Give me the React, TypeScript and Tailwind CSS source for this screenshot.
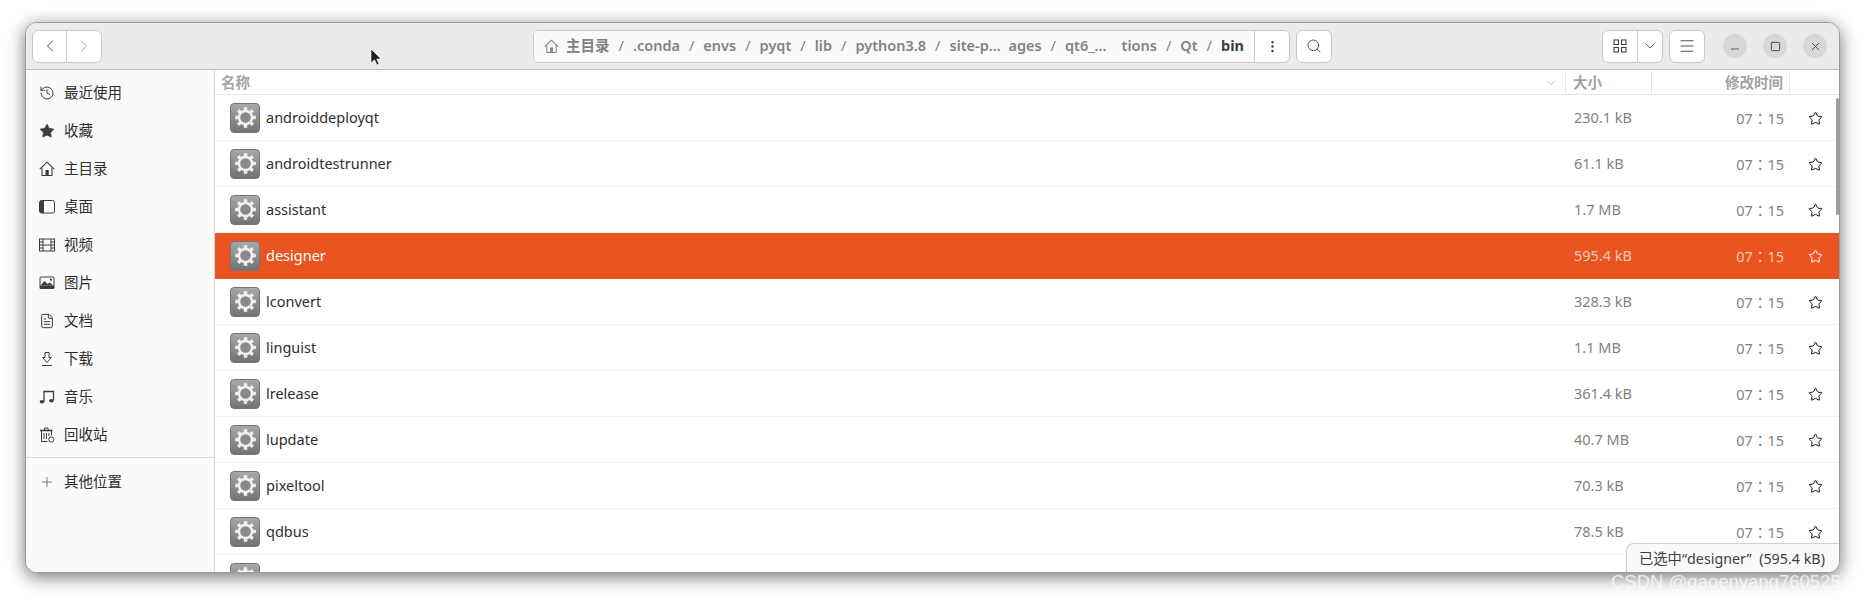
import React from 'react';
import { Plus, FileText, Star, Search, Menu, ChevronDown, ChevronLeft, ChevronRight, Minus, Square, X, MoreVertical, History } from 'lucide-react';

const cjk = "font-['Noto_Sans','Noto_Sans_CJK_SC',sans-serif]";

const HomeIcon = ({ className }: { className?: string }) => (
  <svg viewBox="0 0 16 16" className={className} fill="none" stroke="currentColor" strokeWidth="1.1">
    <path d="M.8 8.2 8 1.2l7.2 7" />
    <path d="M3 6.5V14.5H13V6.5" />
    <rect x="6.5" y="9" width="3.2" height="5.5" fill="currentColor" stroke="none" />
  </svg>
);

const DesktopIcon = () => (
  <svg viewBox="0 0 16 16" className="w-4 h-4 text-[#3d3d3d]" fill="none">
    <rect x="0.5" y="1.5" width="15" height="12.5" rx="2" stroke="currentColor" />
    <path d="M2.5 1.5H5V14H2.5A2 2 0 0 1 .5 12V3.5A2 2 0 0 1 2.5 1.5Z" fill="currentColor" />
  </svg>
);

const FilmIcon = () => (
  <svg viewBox="0 0 16 16" className="w-4 h-4 text-[#3d3d3d]" fill="none" stroke="currentColor">
    <rect x="0.5" y="2" width="15" height="12" />
    <path d="M4 2v12M12 2v12M4 8h8M.5 5h3.5M.5 8h3.5M.5 11h3.5M12 5h3.5M12 8h3.5M12 11h3.5" />
  </svg>
);

const PictureIcon = () => (
  <svg viewBox="0 0 16 16" className="w-4 h-4 text-[#3d3d3d]" fill="none">
    <rect x="0.5" y="1.5" width="15" height="12.5" rx="1.5" fill="currentColor" />
    <rect x="1.5" y="2.5" width="13" height="8" fill="#fafafa" />
    <path d="M1.5 10.5 5.5 6l3 3 2-1.5 4 3Z" fill="currentColor" />
    <circle cx="12" cy="4.7" r="1.1" fill="currentColor" />
  </svg>
);

const DownloadIcon = () => (
  <svg viewBox="0 0 16 16" className="w-4 h-4 text-[#3d3d3d]" fill="none" stroke="currentColor" strokeWidth="1">
    <path d="M6 1.5h4v5h2.5L8 11.5 3.5 6.5H6Z" />
    <path d="M3 14.5h10" />
  </svg>
);

const MusicIcon = () => (
  <svg viewBox="0 0 16 16" className="w-4 h-4 text-[#3d3d3d]" fill="none" stroke="currentColor" strokeWidth="1.3">
    <path d="M5 12.5V2.5h9.5v9" />
    <ellipse cx="3" cy="12.7" rx="2.3" ry="1.8" fill="currentColor" stroke="none" />
    <ellipse cx="12.4" cy="11.7" rx="2.3" ry="1.8" fill="currentColor" stroke="none" />
  </svg>
);

const TrashIcon = () => (
  <svg viewBox="0 0 16 16" className="w-4 h-4 text-[#3d3d3d]" fill="none" stroke="currentColor" strokeWidth="1">
    <path d="M1 3.5h12.5" strokeWidth="1.6" />
    <path d="M5.5 3V1h3.5v2" />
    <path d="M2.5 3.5v11h6M12.5 3.5v5" />
    <path d="M5 6v6M7.5 6v6M10 6v3" />
    <circle cx="12.3" cy="12.5" r="2.6" fill="#fafafa" />
  </svg>
);

const GridIcon = () => (
  <svg viewBox="0 0 14 14" className="w-[14px] h-[14px]" fill="none" stroke="currentColor" strokeWidth="1.1">
    <rect x="1" y="1" width="4.5" height="4.5" />
    <rect x="8.5" y="1" width="4.5" height="4.5" />
    <rect x="1" y="8.5" width="4.5" height="4.5" />
    <rect x="8.5" y="8.5" width="4.5" height="4.5" />
  </svg>
);

const GearTile = () => {
  const teeth = [0, 45, 90, 135, 180, 225, 270, 315];
  return (
    <div className="w-[30px] h-[30px] shrink-0 rounded-[4px] border border-[#757575] bg-gradient-to-b from-[#a8a8a8] to-[#737373] flex items-center justify-center">
      <svg viewBox="0 0 24 24" className="w-[23px] h-[23px]">
        {teeth.map((a) => (
          <rect key={a} x="10.2" y="1.2" width="3.6" height="4" fill="#f0f0f0" transform={`rotate(${a} 12 12)`} />
        ))}
        <circle cx="12" cy="12" r="6.8" fill="#8a8a8a" stroke="#f0f0f0" strokeWidth="2.6" />
      </svg>
    </div>
  );
};

const places = [
  { label: '最近使用', icon: <History className="w-4 h-4 text-[#3d3d3d]" strokeWidth={1.5} /> },
  { label: '收藏', icon: <Star className="w-4 h-4 text-[#3d3d3d] fill-[#3d3d3d]" strokeWidth={1} /> },
  { label: '主目录', icon: <HomeIcon className="w-4 h-4 text-[#3d3d3d]" /> },
  { label: '桌面', icon: <DesktopIcon /> },
  { label: '视频', icon: <FilmIcon /> },
  { label: '图片', icon: <PictureIcon /> },
  { label: '文档', icon: <FileText className="w-4 h-4 text-[#3d3d3d]" strokeWidth={1.5} /> },
  { label: '下载', icon: <DownloadIcon /> },
  { label: '音乐', icon: <MusicIcon /> },
  { label: '回收站', icon: <TrashIcon /> },
];

const files = [
  { name: 'androiddeployqt', size: '230.1 kB' },
  { name: 'androidtestrunner', size: '61.1 kB' },
  { name: 'assistant', size: '1.7 MB' },
  { name: 'designer', size: '595.4 kB', selected: true },
  { name: 'lconvert', size: '328.3 kB' },
  { name: 'linguist', size: '1.1 MB' },
  { name: 'lrelease', size: '361.4 kB' },
  { name: 'lupdate', size: '40.7 MB' },
  { name: 'pixeltool', size: '70.3 kB' },
  { name: 'qdbus', size: '78.5 kB' },
  { name: 'qdbuscpp2xml', size: '61.3 kB' },
];

const crumbs = ['.conda', 'envs', 'pyqt', 'lib', 'python3.8', 'site-p…  ages', 'qt6_…    tions', 'Qt'];

const btn = 'bg-white border border-[#cdc7c2] rounded-[6px] flex items-center justify-center text-[#3d3d3d]';

const App: React.FC = () => {
  return (
    <div className={`relative w-[1865px] h-[602px] bg-white overflow-hidden pt-[22px] pl-[25px] ${cjk}`}>
      <div className="relative w-[1815px] h-[551px] rounded-[12px] border border-[#9a9a9a] bg-white overflow-hidden shadow-[0_4px_18px_rgba(0,0,0,0.55)] flex flex-col">
        {/* header bar */}
        <div className="h-[47px] shrink-0 bg-[#ebebeb] border-b border-[#bdbdbd] flex items-center pl-[6px] pr-[10px]">
          <div className={`${btn} w-[70px] h-[33px]`}>
            <div className="w-1/2 h-full flex items-center justify-center border-r border-[#cdc7c2]">
              <ChevronLeft className="w-[20px] h-[20px]" strokeWidth={1.1} />
            </div>
            <div className="w-1/2 h-full flex items-center justify-center text-[#9a9a9a]">
              <ChevronRight className="w-[20px] h-[20px]" strokeWidth={1.1} />
            </div>
          </div>

          <div className="ml-[431px] w-[757px] h-[33px] bg-white border border-[#cdc7c2] rounded-[6px] flex overflow-hidden">
            <div className="flex-1 bg-[#fafafa] border-r border-[#cdc7c2] flex items-center pl-[10px] text-[14.5px] font-semibold text-[#828282] whitespace-pre">
              <HomeIcon className="w-[15px] h-[15px] mr-[7px]" />
              <span>主目录</span>
              {crumbs.map((c) => (
                <React.Fragment key={c}>
                  <span className="font-normal mx-[9px]">/</span>
                  <span>{c}</span>
                </React.Fragment>
              ))}
              <span className="font-normal mx-[9px]">/</span>
              <span className="font-bold text-[#3d3d3d]">bin</span>
            </div>
            <div className="w-[34px] flex items-center justify-center text-[#3d3d3d]">
              <MoreVertical className="w-[15px] h-[15px]" strokeWidth={2} />
            </div>
          </div>

          <div className={`${btn} ml-[6px] w-[36px] h-[33px]`}>
            <Search className="w-[16px] h-[16px]" strokeWidth={1.3} />
          </div>

          <div className={`${btn} ml-[270px] w-[61px] h-[33px]`}>
            <div className="w-[35px] h-full flex items-center justify-center border-r border-[#cdc7c2]">
              <GridIcon />
            </div>
            <div className="flex-1 flex items-center justify-center">
              <ChevronDown className="w-[16px] h-[16px]" strokeWidth={1.2} />
            </div>
          </div>

          <div className={`${btn} ml-[6px] w-[36px] h-[33px]`}>
            <Menu className="w-[18px] h-[18px]" strokeWidth={1.2} />
          </div>

          <div className="ml-[18px] flex gap-[16px]">
            <div className="w-[24px] h-[24px] rounded-full bg-[#d8d8d8] flex items-center justify-center text-[#3d3d3d]">
              <Minus className="w-[12px] h-[12px] translate-y-[3px]" strokeWidth={1.6} />
            </div>
            <div className="w-[24px] h-[24px] rounded-full bg-[#d8d8d8] flex items-center justify-center text-[#3d3d3d]">
              <Square className="w-[11px] h-[11px]" strokeWidth={2} />
            </div>
            <div className="w-[24px] h-[24px] rounded-full bg-[#d8d8d8] flex items-center justify-center text-[#3d3d3d]">
              <X className="w-[13px] h-[13px]" strokeWidth={1.6} />
            </div>
          </div>
        </div>

        <div className="flex-1 min-h-0 flex">
          {/* sidebar */}
          <div className="w-[189px] shrink-0 bg-[#fafafa] border-r border-[#d6d6d6] pt-[4px]">
            {places.map((p) => (
              <div key={p.label} className="h-[38px] flex items-center pl-[13px] text-[14.5px] text-[#2e2e2e]">
                <span className="w-[16px] h-[16px] flex items-center justify-center">{p.icon}</span>
                <span className="ml-[9px]">{p.label}</span>
              </div>
            ))}
            <div className="mt-[3px] border-t border-[#dcdcdc] pt-[5px]">
              <div className="h-[38px] flex items-center pl-[13px] text-[14.5px] text-[#2e2e2e]">
                <Plus className="w-4 h-4 text-[#3d3d3d]" strokeWidth={1} />
                <span className="ml-[9px]">其他位置</span>
              </div>
            </div>
          </div>

          {/* file list */}
          <div className="relative flex-1 min-w-0 overflow-hidden">
            <div className="h-[25px] pt-[1px] border-b border-[#e6e6e6] flex items-center text-[14.5px] font-semibold text-[#a3a3a3]">
              <div className="w-[1351px] h-full pl-[6px] border-r border-[#e6e6e6] flex items-center justify-between pr-[7px]">
                <span>名称</span>
                <ChevronDown className="w-[14px] h-[14px] text-[#a3a3a3]" strokeWidth={1.2} />
              </div>
              <div className="w-[86px] h-full pl-[7px] border-r border-[#e6e6e6] flex items-center">大小</div>
              <div className="w-[138px] h-full pr-[6px] border-r border-[#e6e6e6] flex items-center justify-end">修改时间</div>
            </div>

            {files.map((f) => (
              <div
                key={f.name}
                className={`h-[46px] flex items-center border-b text-[14.5px] ${f.selected ? 'bg-[#e95420] border-[#e95420] text-white' : 'border-[#f3f3f3] text-[#2e2e2e]'}`}
              >
                <div className="w-[1351px] pl-[15px] flex items-center">
                  <GearTile />
                  <span className="ml-[6px]">{f.name}</span>
                </div>
                <div className={`w-[86px] pl-[8px] ${f.selected ? 'text-[#f5c9b5]' : 'text-[#857f7a]'}`}>{f.size}</div>
                <div className={`w-[138px] pr-[6px] text-right translate-y-[1px] font-['Noto_Sans','Noto_Sans_CJK_TC',sans-serif] ${f.selected ? 'text-[#f5c9b5]' : 'text-[#857f7a]'}`}>07：15</div>
                <div className="w-[49px] pl-[1px] flex justify-center">
                  <Star className={`w-[15px] h-[15px] translate-y-[1px] ${f.selected ? 'text-white' : 'text-[#111111]'}`} strokeWidth={1.6} />
                </div>
              </div>
            ))}

            {/* scrollbar */}
            <div className="absolute right-0 top-[28px] w-[3px] h-[117px] rounded-full bg-[#9e9e9e]" />

            {/* status overlay */}
            <div className="absolute right-0 bottom-0 w-[213px] h-[29px] pt-[2px] bg-[#fafafa] border-t border-l border-[#cfcfcf] rounded-tl-[8px] flex items-center pl-[12px] text-[14.3px] text-[#3d3d3d] whitespace-pre">
              已选中“designer”  (595.4 kB)
            </div>
          </div>
        </div>
      </div>

      {/* pointer */}
      <svg viewBox="0 0 12 18" className="absolute left-[370px] top-[48px] w-[12px] h-[18px]">
        <path d="M1 1v14l3.5-3.2L7 17l2-1-2.3-5H11Z" fill="#1f1f1f" stroke="#ffffff" strokeWidth="0.6" />
      </svg>

      {/* watermark */}
      <div className="absolute left-[1611px] top-[568px] text-[18.5px] text-white/70 whitespace-nowrap font-['Liberation_Sans',sans-serif]">
        CSDN @gaoenyang760525
      </div>
    </div>
  );
};

export default App;
